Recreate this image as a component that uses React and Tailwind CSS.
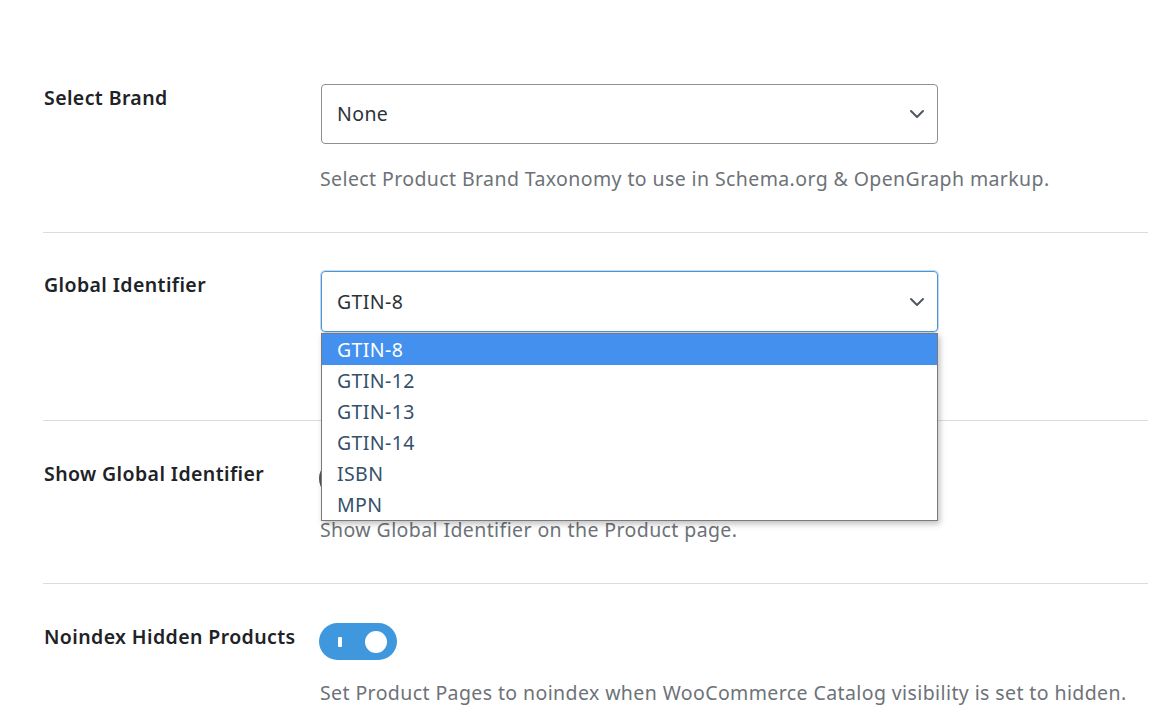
import React from "react";

const font = { fontFamily: '"Noto Sans", "Open Sans", sans-serif' };

function Chevron() {
  return (
    <svg width="16" height="10" viewBox="0 0 16 10" className="shrink-0">
      <path d="M2 2 L8 8 L14 2" fill="none" stroke="#50575e" strokeWidth="2" strokeLinecap="round" strokeLinejoin="round" />
    </svg>
  );
}

function Label({ children }) {
  return (
    <div className="w-[278px] shrink-0 pl-[1px] text-[19.5px] tracking-[0.4px] leading-[28px] font-semibold text-[#1d2327]">
      {children}
    </div>
  );
}

function Help({ children, className = "" }) {
  return (
    <p className={"text-[19.5px] tracking-[0.4px] leading-[24px] text-[#6d7278] whitespace-nowrap " + className}>{children}</p>
  );
}

export default function App() {
  const options = ["GTIN-8", "GTIN-12", "GTIN-13", "GTIN-14", "ISBN", "MPN"];
  return (
    <div className="w-[1172px] h-[724px] bg-white overflow-hidden" style={font}>
      <div className="ml-[43px] w-[1105px]">
        {/* Row 1 */}
        <div className="flex items-start pt-[84px] pb-[41px] border-b border-[#dcdcde]">
          <Label>Select Brand</Label>
          <div>
            <div className="w-[617px] h-[60px] border border-[#8c8f94] rounded-[4px] flex items-center justify-between pl-[15px] pr-[12px] text-[19.5px] tracking-[0.4px] text-[#2c3338]">
              <span>None</span>
              <Chevron />
            </div>
            <Help className="mt-[23px] -ml-[1px]">Select Product Brand Taxonomy to use in Schema.org &amp; OpenGraph markup.</Help>
          </div>
        </div>

        {/* Row 2 */}
        <div className="relative flex items-start pt-[38px] pb-[41px] border-b border-[#dcdcde]">
          <Label>Global Identifier</Label>
          <div className="relative">
            <div className="w-[617px] h-[61px] border border-[#4f94d4] rounded-[4px] shadow-[0_0_0_1px_rgba(79,148,212,0.35)] flex items-center justify-between pl-[15px] pr-[12px] text-[19.5px] tracking-[0.4px] text-[#2c3338]">
              <span>GTIN-8</span>
              <Chevron />
            </div>
            <div className="mt-[23px] h-[24px]" />
            <div className="absolute z-10 left-0 top-[62px] w-[617px] bg-white border border-[#7a7a7a] shadow-[2px_3px_6px_rgba(0,0,0,0.25)]">
              {options.map((o, i) => (
                <div
                  key={o}
                  className={
                    "h-[31px] pl-[15px] flex items-center text-[19.5px] tracking-[0.4px] " +
                    (i === 0 ? "bg-[#4390ee] text-white" : "text-[#34506b]")
                  }
                >
                  {o}
                </div>
              ))}
            </div>
          </div>
        </div>

        {/* Row 3 */}
        <div className="flex items-start pt-[39px] pb-[41px] border-b border-[#dcdcde]">
          <Label>Show Global Identifier</Label>
          <div className="-ml-[2px]">
            <div className="w-[77px] h-[37px] rounded-full border-2 border-[#50575e] bg-white flex items-center pl-[8px]">
              <div className="w-[20px] h-[20px] rounded-full bg-[#50575e]" />
            </div>
            <Help className="mt-[21px] ml-[1px]">Show Global Identifier on the Product page.</Help>
          </div>
        </div>

        {/* Row 4 */}
        <div className="flex items-start pt-[39px]">
          <Label>Noindex Hidden Products</Label>
          <div className="-ml-[2px]">
            <div className="w-[78px] h-[37px] rounded-full bg-[#3f98dd] flex items-center justify-between pl-[19px] pr-[10px]">
              <div className="w-[4px] h-[10px] bg-white rounded-[1px]" />
              <div className="w-[22px] h-[22px] rounded-full bg-white" />
            </div>
            <Help className="mt-[21px] ml-[1px]">Set Product Pages to noindex when WooCommerce Catalog visibility is set to hidden.</Help>
          </div>
        </div>
      </div>
    </div>
  );
}
